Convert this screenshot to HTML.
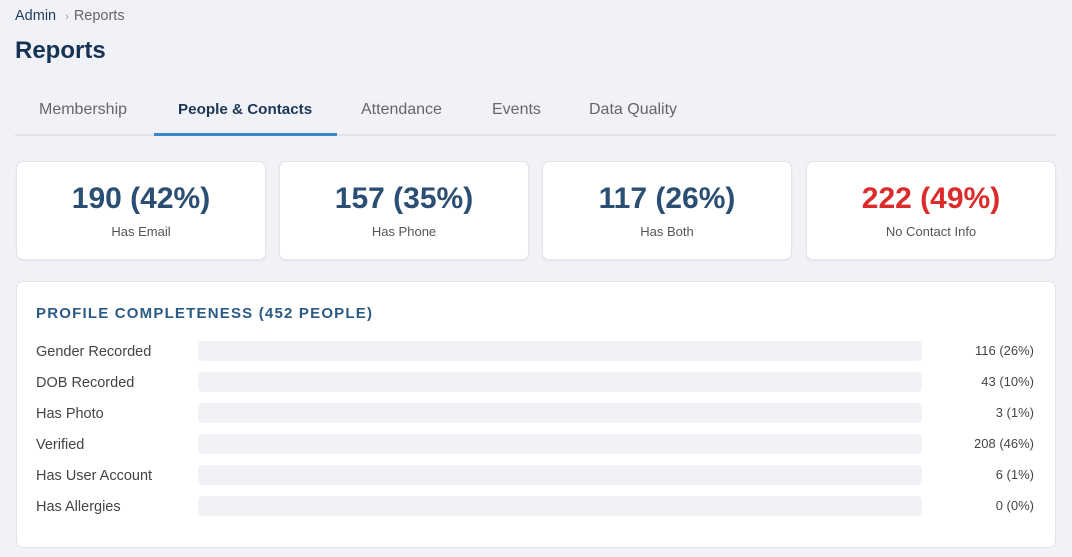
<html><head><style>
body{margin:0;width:1072px;height:557px;background:#f1f2f8;font-family:"Liberation Sans",sans-serif;position:relative;overflow:hidden}
.a{position:absolute}
.card{position:absolute;top:161px;width:248px;height:97px;background:#fff;border:1px solid #e2e4ea;border-radius:7px;box-shadow:0 1px 2px rgba(0,0,0,.05);text-align:center}
.card .n{font-size:30px;font-weight:bold;color:#2b4e73;margin-top:19px;line-height:35px}
.card .l{font-size:13px;color:#555;margin-top:8px}
.tab{position:absolute;top:101px;font-size:16px;color:#666}
.lab{position:absolute;left:36px;font-size:14.5px;color:#444}
.bar{position:absolute;left:198px;width:724px;height:20px;background:#f1f2f5;border-radius:4px}
.val{position:absolute;right:38px;font-size:13px;color:#444}
</style></head><body>
<div class="a" style="left:15px;top:8px;font-size:14.5px;color:#1f3d5e">Admin <span style="color:#999;font-size:11px;margin:0 5px">›</span><span style="color:#666">Reports</span></div>
<div class="a" style="left:15px;top:37px;font-size:24px;font-weight:bold;color:#163354">Reports</div>
<div class="tab" style="left:39px">Membership</div>
<div class="tab" style="left:178px;color:#1c3654;font-weight:bold;font-size:15.2px">People &amp; Contacts</div>
<div class="tab" style="left:361px">Attendance</div>
<div class="tab" style="left:492px">Events</div>
<div class="tab" style="left:589px">Data Quality</div>
<div class="a" style="left:15px;top:134px;width:1041px;height:2px;background:#e3e4ea"></div>
<div class="a" style="left:154px;top:133px;width:183px;height:3px;background:#3b86c9"></div>
<div class="card" style="left:16px"><div class="n">190 (42%)</div><div class="l">Has Email</div></div>
<div class="card" style="left:279px"><div class="n">157 (35%)</div><div class="l">Has Phone</div></div>
<div class="card" style="left:542px"><div class="n">117 (26%)</div><div class="l">Has Both</div></div>
<div class="card" style="left:806px"><div class="n" style="color:#dc2b2b">222 (49%)</div><div class="l">No Contact Info</div></div>
<div class="a" style="left:16px;top:281px;width:1038px;height:265px;background:#fff;border:1px solid #e2e4ea;border-radius:7px"></div>
<div class="a" style="left:36px;top:305px;font-size:15px;font-weight:bold;color:#2b5a85;letter-spacing:1.2px">PROFILE COMPLETENESS (452 PEOPLE)</div>
<div class="lab" style="top:344px">Gender Recorded</div><div class="bar" style="top:341px"></div><div class="val" style="top:343px">116 (26%)</div>
<div class="lab" style="top:375px">DOB Recorded</div><div class="bar" style="top:372px"></div><div class="val" style="top:374px">43 (10%)</div>
<div class="lab" style="top:406px">Has Photo</div><div class="bar" style="top:403px"></div><div class="val" style="top:405px">3 (1%)</div>
<div class="lab" style="top:437px">Verified</div><div class="bar" style="top:434px"></div><div class="val" style="top:436px">208 (46%)</div>
<div class="lab" style="top:468px">Has User Account</div><div class="bar" style="top:465px"></div><div class="val" style="top:467px">6 (1%)</div>
<div class="lab" style="top:499px">Has Allergies</div><div class="bar" style="top:496px"></div><div class="val" style="top:498px">0 (0%)</div>
</body></html>
